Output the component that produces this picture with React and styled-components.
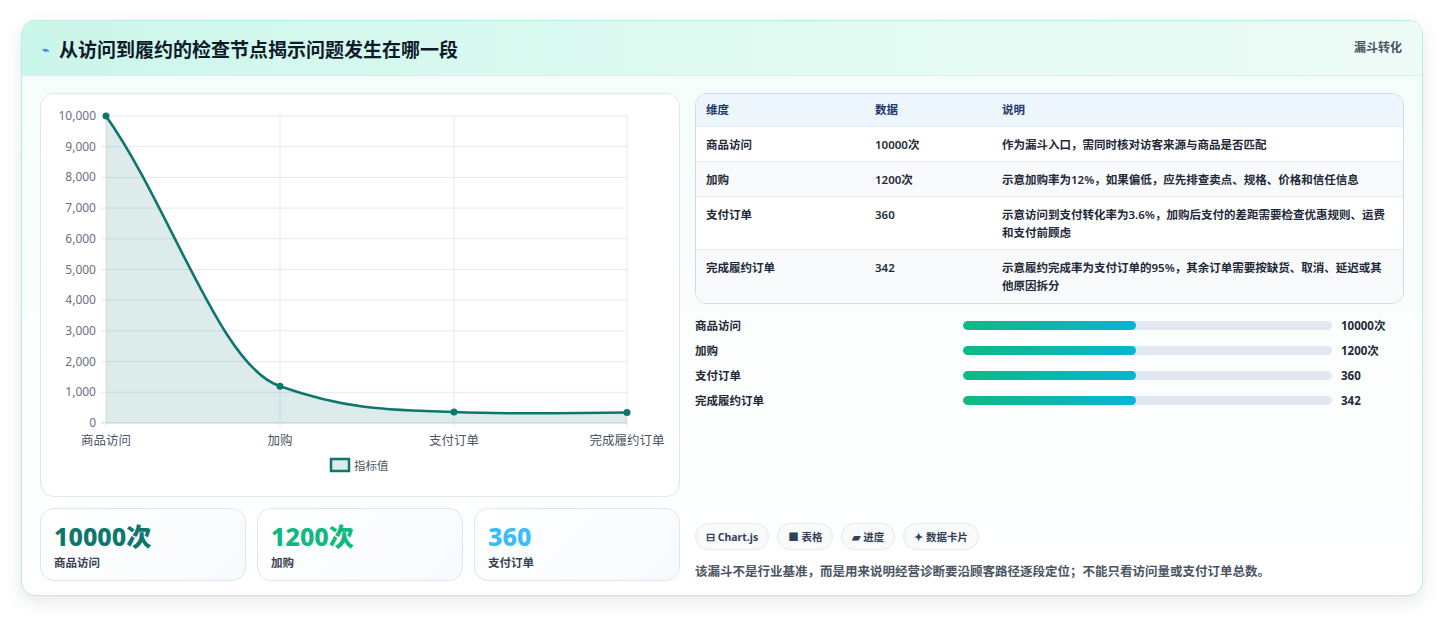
import React from "react";
import styled, { createGlobalStyle } from "styled-components";

const G = createGlobalStyle`
  body{margin:0;background:#fff;font-family:"Noto Sans","Noto Sans CJK SC",sans-serif;}
`;
const Page = styled.div`padding:20px 21px 22px 21px;`;
const Card = styled.div`
  border:1px solid #b8ecdf;border-radius:14px;overflow:hidden;
  background:linear-gradient(180deg,#f3fdf9 0%,#fbfefd 60%,#fff 100%);
  box-shadow:0 6px 18px rgba(15,60,50,0.10);height:576px;box-sizing:border-box;
`;
const Header = styled.div`
  height:55px;display:flex;align-items:center;justify-content:space-between;
  padding:0 20px 0 20px;background:linear-gradient(90deg,#cbf6ea,#e3fbf3 60%,#eefcf7);
  border-bottom:1px solid #d6f1ea;box-sizing:border-box;
`;
const Title = styled.h1`
  margin:0;font-size:19px;font-weight:700;color:#0f1a2a;display:flex;align-items:center;gap:10px;
  position:relative;top:1px;
`;
const Tag = styled.span`font-size:12px;font-weight:700;color:#4b5563;align-self:flex-start;margin-top:17px;`;
const Body = styled.div`
  display:grid;grid-template-columns:640px 1fr;gap:15px;padding:17px 18px 0 18px;
`;
const Col = styled.div`display:flex;flex-direction:column;gap:11px;`;
const ChartBox = styled.div`
  height:404px;border:1px solid #dfe6ee;border-radius:14px;background:#fff;box-sizing:border-box;
`;
const Stats = styled.div`display:grid;grid-template-columns:repeat(3,1fr);gap:11px;`;
const Stat = styled.div`
  height:73px;border:1px solid #dde6f0;border-radius:14px;background:linear-gradient(135deg,#fff,#f7fafd);
  padding:11px 13px;box-sizing:border-box;
`;
const Big = styled.div`font-size:25px;font-weight:800;color:${p=>p.c};line-height:32px;`;
const Small = styled.div`font-size:11.5px;font-weight:600;color:#374151;margin-top:2px;`;
const Right = styled.div`display:flex;flex-direction:column;height:487px;`;
const Table = styled.div`
  border:1px solid #cfdce8;border-radius:12px;overflow:hidden;background:#fff;
`;
const Row = styled.div`
  display:grid;grid-template-columns:169px 127px 1fr;padding:0 10px;align-items:start;
  min-height:${p=>p.h}px;box-sizing:border-box;padding-top:${p=>p.pt}px;
  background:${p=>p.head?"#edf5fd":p.alt?"#f8fafc":"#fff"};
  border-bottom:${p=>p.last?"none":"1px solid #e5ebf2"};
  font-size:11.5px;font-weight:${p=>p.head?700:600};color:${p=>p.head?"#1e3a6a":"#1f2937"};line-height:18px;
`;
const Bars = styled.div`display:flex;flex-direction:column;gap:7px;margin-top:12px;`;
const BarRow = styled.div`display:grid;grid-template-columns:268px 369px 1fr;gap:0;align-items:center;height:18px;font-size:11.5px;font-weight:600;color:#1f2937;`;
const Track = styled.div`height:9px;border-radius:5px;background:#e2e8f0;overflow:hidden;`;
const Fill = styled.div`height:100%;border-radius:5px;background:linear-gradient(90deg,#10b981,#06b6d4);`;
const Val = styled.span`padding-left:9px;font-weight:700;`;
const Chips = styled.div`display:flex;gap:8px;margin-top:auto;`;
const Chip = styled.span`
  height:27px;padding:0 10px;border:1px solid #e2e8f0;border-radius:14px;background:#f8fafc;
  display:flex;align-items:center;gap:3px;font-size:10.5px;font-weight:700;color:#334155;box-sizing:border-box;
`;
const Note = styled.p`margin:11px 0 0;font-size:12.5px;font-weight:600;color:#4b5563;`;

const ys=[10000,9000,8000,7000,6000,5000,4000,3000,2000,1000,0];
function Chart(){
  const X0=65,X1=586,Y0=22,Y1=329;
  const xs=[65,239,413,586];
  const y=v=>Y1-(v/10000)*(Y1-Y0);
  const d=`M65,${y(10000)} C130,${y(7000)} 180,${y(1800)} 239,${y(1200)} C300,${y(500)} 340,${y(420)} 413,${y(360)} C480,${y(270)} 520,${y(330)} 586,${y(342)}`;
  return (
    <svg width="640" height="402" style={{display:"block"}} fontFamily="Noto Sans,Noto Sans CJK SC,sans-serif">
      {ys.map((v,i)=>{const yy=y(v);return <g key={v}>
        <line x1={X0-5} x2={X1} y1={yy} y2={yy} stroke={v===0?"#c8d0da":"#e5e9ef"}/>
        <text x={X0-10} y={yy+4} fontSize="12" fill="#6b7280" textAnchor="end">{v.toLocaleString("en-US")}</text></g>})}
      {xs.map(x=><line key={x} x1={x} x2={x} y1={Y0} y2={Y1+5} stroke="#e5e9ef"/>)}
      <path d={d+` L586,${Y1} L65,${Y1} Z`} fill="rgba(15,118,110,0.14)"/>
      <path d={d} fill="none" stroke="#0f766e" strokeWidth="2.6"/>
      {[10000,1200,360,342].map((v,i)=><circle key={i} cx={xs[i]} cy={y(v)} r="3.5" fill="#0f766e"/>)}
      {["商品访问","加购","支付订单","完成履约订单"].map((t,i)=><text key={t} x={xs[i]} y={351} fontSize="12.5" fill="#4b5563" textAnchor="middle">{t}</text>)}
      <rect x="290" y="365" width="18" height="12" fill="rgba(15,118,110,0.14)" stroke="#0f766e" strokeWidth="2.5"/>
      <text x="313" y="376" fontSize="11.5" fill="#4b5563">指标值</text>
    </svg>
  );
}

const rows=[
  ["商品访问","10000次","作为漏斗入口，需同时核对访客来源与商品是否匹配",35],
  ["加购","1200次","示意加购率为12%，如果偏低，应先排查卖点、规格、价格和信任信息",35],
  ["支付订单","360","示意访问到支付转化率为3.6%，加购后支付的差距需要检查优惠规则、运费和支付前顾虑",53],
  ["完成履约订单","342","示意履约完成率为支付订单的95%，其余订单需要按缺货、取消、延迟或其他原因拆分",53],
];

export default function App(){
  return <Page><G/>
    <Card>
      <Header>
        <Title><span style={{color:"#3b82f6",fontSize:12}}>⌁</span>从访问到履约的检查节点揭示问题发生在哪一段</Title>
        <Tag>漏斗转化</Tag>
      </Header>
      <Body>
        <Col>
          <ChartBox><Chart/></ChartBox>
          <Stats>
            <Stat><Big c="#0f766e">10000次</Big><Small>商品访问</Small></Stat>
            <Stat><Big c="#10b981">1200次</Big><Small>加购</Small></Stat>
            <Stat><Big c="#38bdf8">360</Big><Small>支付订单</Small></Stat>
          </Stats>
        </Col>
        <Right>
          <Table>
            <Row head h={33} pt={7}><span>维度</span><span>数据</span><span>说明</span></Row>
            {rows.map((r,i)=><Row key={r[0]} alt={i%2===1} last={i===3} h={r[3]} pt={9}><span>{r[0]}</span><span>{r[1]}</span><span>{r[2]}</span></Row>)}
          </Table>
          <Bars>
            {rows.map(r=><BarRow key={r[0]}><span>{r[0]}</span><Track><Fill style={{width:"47%"}}/></Track><Val>{r[1]}</Val></BarRow>)}
          </Bars>
          <Chips><Chip>⊟ Chart.js</Chip><Chip>■ 表格</Chip><Chip>▰ 进度</Chip><Chip>✦ 数据卡片</Chip></Chips>
          <Note>该漏斗不是行业基准，而是用来说明经营诊断要沿顾客路径逐段定位；不能只看访问量或支付订单总数。</Note>
        </Right>
      </Body>
    </Card>
  </Page>;
}
